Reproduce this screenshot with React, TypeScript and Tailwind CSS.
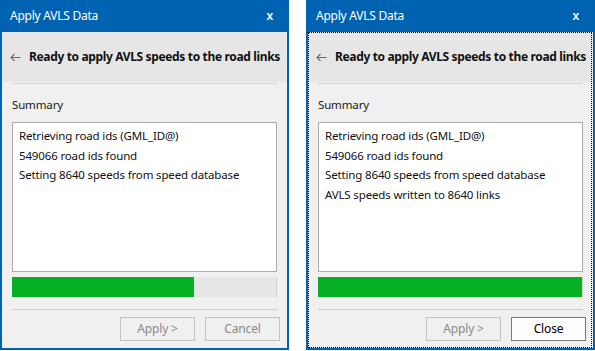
import React from 'react';

type DialogProps = {
  lines: string[];
  progress: number;
  secondaryLabel: string;
  secondaryEnabled: boolean;
  focused?: boolean;
};

const FONT = 'font-["Noto_Sans","Open_Sans",sans-serif]';

function BackArrow() {
  return (
    <svg width="11" height="9" viewBox="0 0 11 9" className="shrink-0">
      <path d="M10.5 4.5H1M4.5 1L1 4.5L4.5 8" fill="none" stroke="#6d6d6d" strokeWidth="1.1" />
    </svg>
  );
}

function WizButton({ label, enabled }: { label: string; enabled: boolean }) {
  return (
    <div
      className={
        enabled
          ? 'w-[75px] h-[24px] flex items-center justify-center border border-[#7a7a7a] bg-[#fdfdfd] text-[12px] tracking-[-0.15px] text-[#000]'
          : 'w-[75px] h-[24px] flex items-center justify-center border border-[#c4c4c4] bg-[#f0f0f0] text-[12px] tracking-[-0.15px] text-[#8a8a8a]'
      }
    >
      {label}
    </div>
  );
}

function Dialog({ lines, progress, secondaryLabel, secondaryEnabled, focused }: DialogProps) {
  return (
    <div className="relative w-[289px] h-[350px] bg-[#0063b1] flex flex-col px-[2px] pb-[2px] shrink-0">
      {/* title bar */}
      <div className="h-[32px] flex items-center justify-between pl-[8px] pr-[14px] text-white text-[12px] tracking-[-0.25px]">
        <span>Apply AVLS Data</span>
        <span className="text-[12px] font-semibold">x</span>
      </div>

      <div className="flex-1 bg-[#f0f0f0] flex flex-col">
        {/* header band */}
        <div className="h-[50px] bg-[#e6e6e6] flex items-center gap-[8px] pl-[8px]">
          <BackArrow />
          <span className="text-[12px] font-bold text-[#111] whitespace-nowrap tracking-[-0.35px]">
            Ready to apply AVLS speeds to the road links
          </span>
        </div>
        <div className="mx-[10px] mt-[1px] h-px bg-[#d2d2d2]" />

        <div className="px-[10px] pt-[13px] text-[11.5px] tracking-[-0.15px] text-[#1a1a1a] leading-[16px]">Summary</div>

        {/* log box */}
        <div className="mx-[10px] mt-[9px] h-[150px] bg-white border border-[#acacac] px-[6px] pt-[3px] text-[11.5px] tracking-[-0.15px] text-[#111] leading-[19.5px]">
          {lines.map((l) => (
            <div key={l}>{l}</div>
          ))}
        </div>

        {/* progress */}
        <div className="mx-[10px] mt-[5px] h-[20px] bg-[#e6e6e6] border-r border-[#cfcfcf] flex">
          <div className="h-full bg-[#06b025]" style={{ width: `${progress}%` }} />
        </div>

        <div className="mx-[10px] mt-[12px] h-px bg-[#cfcfcf]" />

        {/* buttons */}
        <div className="flex justify-end gap-[10px] pr-[7px] mt-[7px]">
          <WizButton label="Apply >" enabled={false} />
          <WizButton label={secondaryLabel} enabled={secondaryEnabled} />
        </div>
      </div>

      {focused && (
        <div className="absolute left-[2px] right-[3px] top-[32px] bottom-[2px] border border-dotted border-black pointer-events-none" />
      )}
    </div>
  );
}

export default function App() {
  return (
    <div className={`w-[595px] h-[351px] bg-white flex gap-[17px] ${FONT}`}>
      <Dialog
        lines={[
          'Retrieving road ids (GML_ID@)',
          '549066 road ids found',
          'Setting 8640 speeds from speed database',
        ]}
        progress={69}
        secondaryLabel="Cancel"
        secondaryEnabled={false}
      />
      <Dialog
        lines={[
          'Retrieving road ids (GML_ID@)',
          '549066 road ids found',
          'Setting 8640 speeds from speed database',
          'AVLS speeds written to 8640 links',
        ]}
        progress={100}
        secondaryLabel="Close"
        secondaryEnabled
        focused
      />
    </div>
  );
}
